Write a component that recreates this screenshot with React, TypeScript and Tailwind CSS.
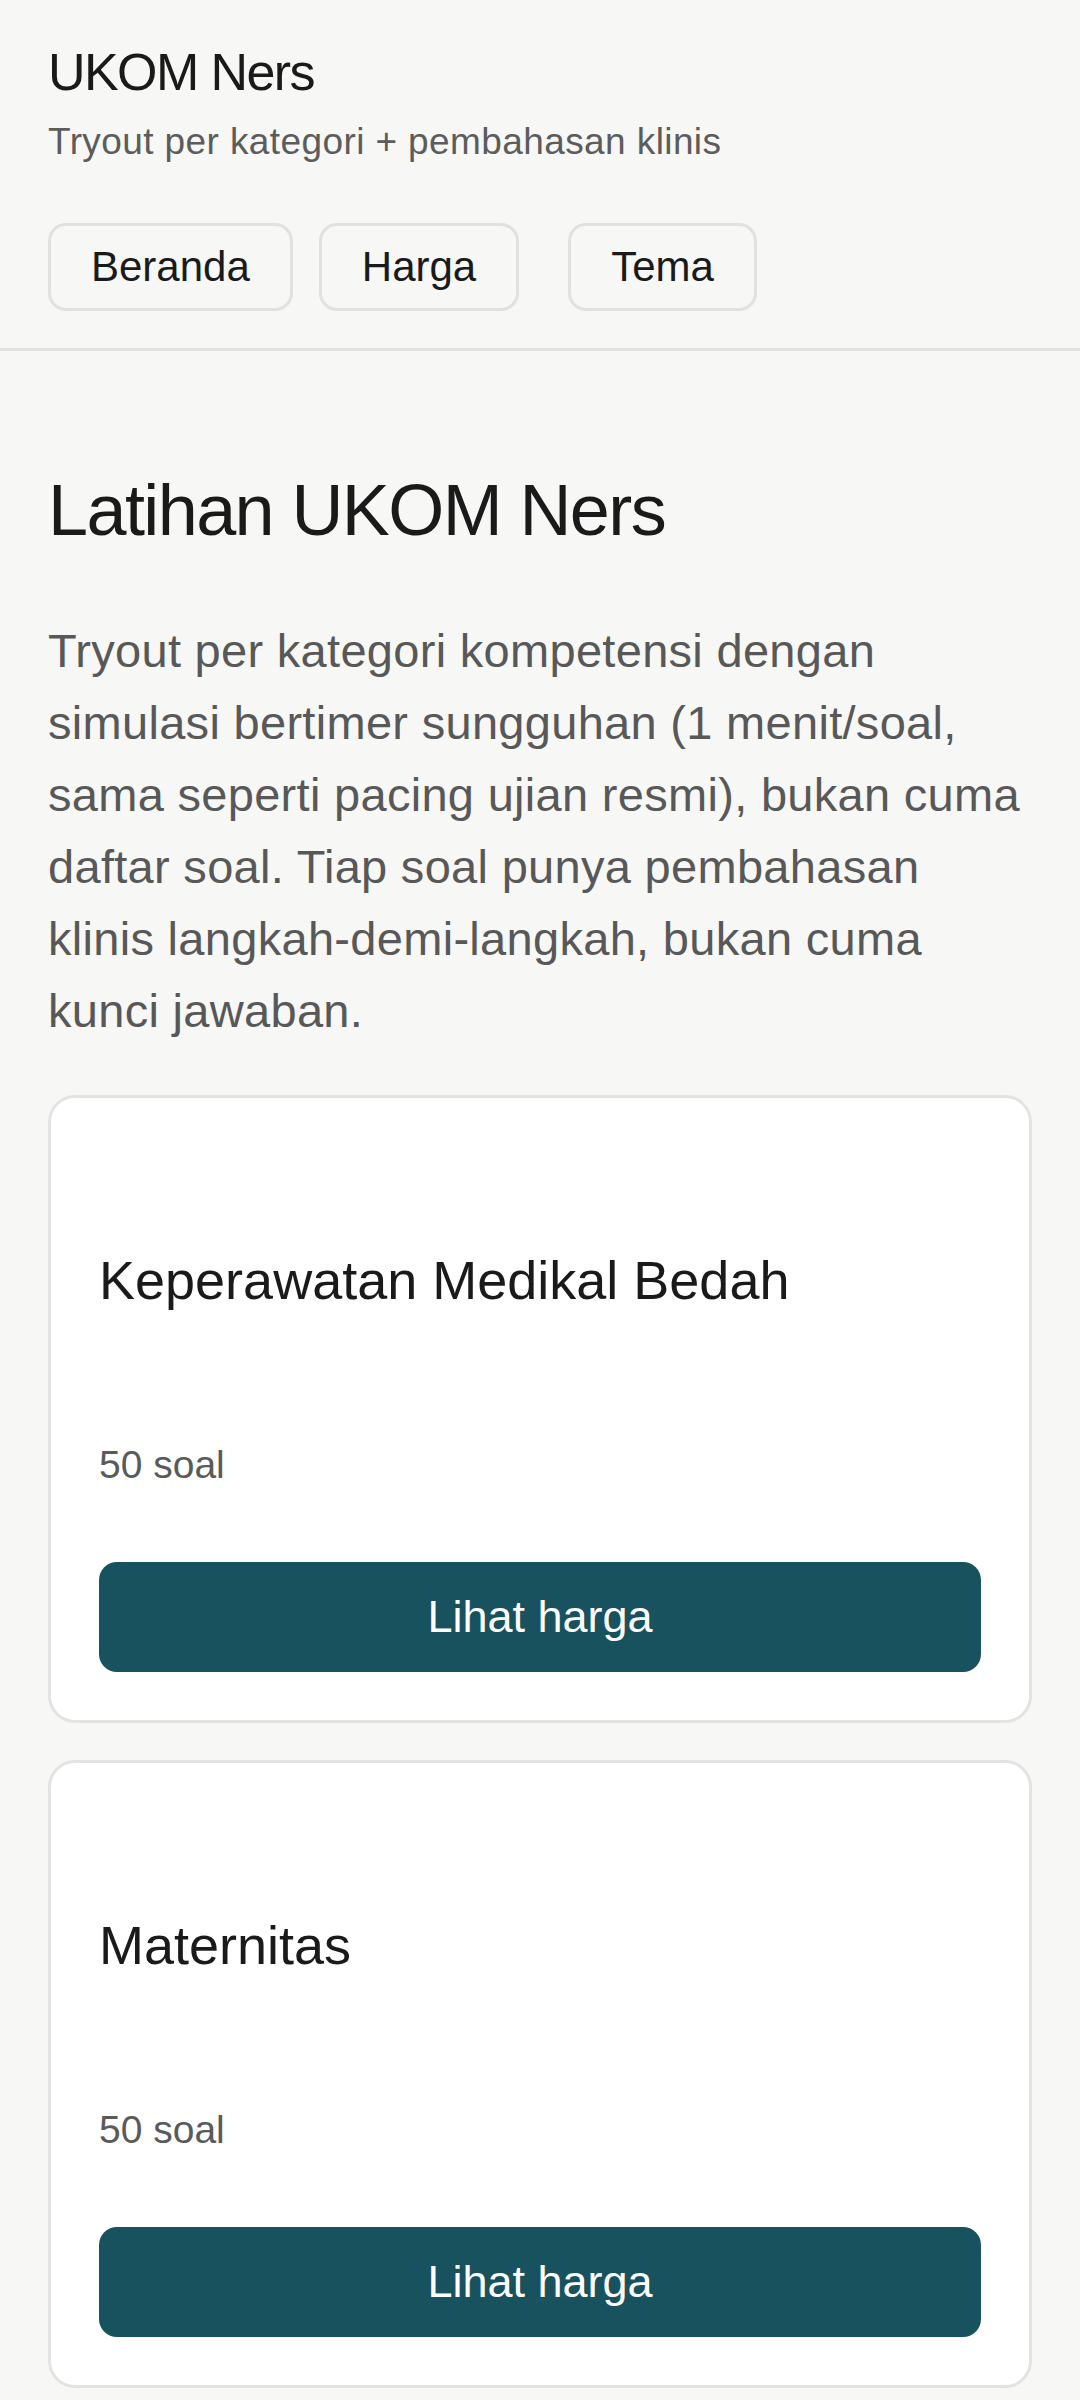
const categories = [
  { name: 'Keperawatan Medikal Bedah', count: 50 },
  { name: 'Maternitas', count: 50 },
]

const sans = "font-['Liberation_Sans',Arial,sans-serif]"

function NavButton({ label, className = '' }: { label: string; className?: string }) {
  return (
    <button
      className={`h-[88px] rounded-[18px] border-[3px] border-[#e1e1df] bg-[#f7f7f6] px-[40px] text-[42px] leading-none text-[#1a1a1a] ${className}`}
    >
      {label}
    </button>
  )
}

function CategoryCard({ name, count }: { name: string; count: number }) {
  return (
    <div className="flex flex-col rounded-[27px] border-[3px] border-[#e3e3e1] bg-white px-[48px] pt-[48px] pb-[48px]">
      <h3 className="mt-[101px] text-[54px] leading-[1.25] text-[#1a1a1a]">{name}</h3>
      <p className="mt-[127px] text-[39px] leading-[1.25] text-[#5a5a5a]">{count} soal</p>
      <button className="mt-[72px] h-[110px] w-full rounded-[18px] bg-[#17525e] text-[45px] text-white">
        Lihat harga
      </button>
    </div>
  )
}

export default function App() {
  return (
    <div className={`min-h-[2400px] bg-[#f7f7f5] ${sans}`}>
      <header className="border-b-[3px] border-[#e1e1df] px-[48px] pt-[40px] pb-[37px]">
        <h1 className="text-[52px] leading-[1.25] tracking-[-1.6px] text-[#1a1a1a]">UKOM Ners</h1>
        <p className="mt-[14px] text-[37px] leading-[1.25] tracking-[0.4px] text-[#5c5c5c]">
          Tryout per kategori + pembahasan klinis
        </p>
        <nav className="mt-[58px] flex">
          <NavButton label="Beranda" />
          <NavButton label="Harga" className="ml-[26px]" />
          <NavButton label="Tema" className="ml-[49px]" />
        </nav>
      </header>

      <main className="px-[48px] pb-[40px]">
        <h2 className="mt-[116px] text-[72px] leading-[1.2] tracking-[-1.6px] text-[#1a1a1a]">
          Latihan UKOM Ners
        </h2>
        <p className="mt-[61px] text-[47px] leading-[72px] tracking-[0.3px] text-[#585858]">
          Tryout per kategori kompetensi dengan simulasi bertimer sungguhan (1 menit/soal, sama
          seperti pacing ujian resmi), bukan cuma daftar soal. Tiap soal punya pembahasan klinis
          langkah-demi-langkah, bukan cuma kunci jawaban.
        </p>

        <div className="mt-[48px] flex flex-col gap-[37px]">
          {categories.map((c) => (
            <CategoryCard key={c.name} name={c.name} count={c.count} />
          ))}
        </div>
      </main>
    </div>
  )
}
